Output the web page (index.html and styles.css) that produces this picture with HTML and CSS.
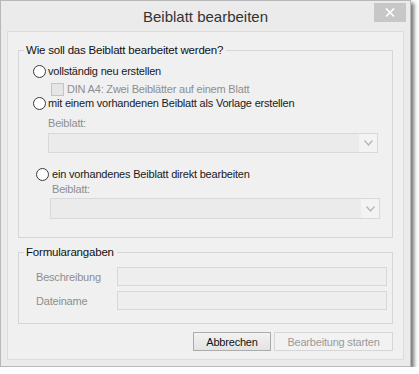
FILE: index.html
```html
<!DOCTYPE html>
<html lang="de">
<head>
<meta charset="utf-8">
<title>Beiblatt bearbeiten</title>
<link rel="stylesheet" href="styles.css">
</head>
<body>
<div class="window">
  <div class="titlebar">
    <span class="spacer"></span>
    <span class="title">Beiblatt bearbeiten</span>
    <span class="close"><svg width="10" height="9" viewBox="0 0 10 9"><path d="M1 0.5 L9 8.5 M9 0.5 L1 8.5" stroke="#fff" stroke-width="1.6" fill="none"/></svg></span>
  </div>
  <div class="client">
    <fieldset class="group group-mode">
      <legend>Wie soll das Beiblatt bearbeitet werden?</legend>
      <div class="row row-r1"><span class="radio"></span><span class="txt">vollständig neu erstellen</span></div>
      <div class="row row-cb"><span class="check"></span><span class="txt dis">DIN A4: Zwei Beiblätter auf einem Blatt</span></div>
      <div class="row row-r2"><span class="radio"></span><span class="txt">mit einem vorhandenen Beiblatt als Vorlage erstellen</span></div>
      <div class="lbl lbl1 dis">Beiblatt:</div>
      <div class="select sel1"><span class="sel-field"></span><span class="sel-btn"><svg width="9" height="6" viewBox="0 0 9 6"><path d="M0.5 0.5 L4.5 5 L8.5 0.5" stroke="#b3b3b3" stroke-width="1.2" fill="none"/></svg></span></div>
      <div class="row row-r3"><span class="radio"></span><span class="txt">ein vorhandenes Beiblatt direkt bearbeiten</span></div>
      <div class="lbl lbl2 dis">Beiblatt:</div>
      <div class="select sel2"><span class="sel-field"></span><span class="sel-btn"><svg width="9" height="6" viewBox="0 0 9 6"><path d="M0.5 0.5 L4.5 5 L8.5 0.5" stroke="#b3b3b3" stroke-width="1.2" fill="none"/></svg></span></div>
    </fieldset>
    <fieldset class="group group-form">
      <legend>Formularangaben</legend>
      <div class="frow frow1"><span class="flabel dis">Beschreibung</span><span class="input"></span></div>
      <div class="frow frow2"><span class="flabel dis">Dateiname</span><span class="input"></span></div>
    </fieldset>
    <div class="buttons">
      <span class="btn btn-cancel">Abbrechen</span>
      <span class="btn btn-start">Bearbeitung starten</span>
    </div>
  </div>
</div>
</body>
</html>
```
FILE: styles.css
```css
html, body {
  margin: 0;
  padding: 0;
  background: #ffffff;
}
body {
  font-family: "Liberation Sans", Arial, sans-serif;
  font-size: 11px;
  letter-spacing: -0.2px;
  color: #1a1a1a;
}
.window {
  width: 411px;
  height: 367px;
  box-sizing: border-box;
  border: 1px solid #b8b8b8;
  background: #ebebeb;
  box-shadow: 3px 3px 4px rgba(0, 0, 0, 0.55);
  display: flex;
  flex-direction: column;
}
.titlebar {
  height: 30px;
  display: grid;
  grid-template-columns: 1fr auto 1fr;
  flex: none;
}
.title {
  font-size: 15px;
  letter-spacing: 0;
  color: #333;
  line-height: 30px;
  padding-top: 1px;
}
.close {
  justify-self: end;
  align-self: start;
  margin-top: 2px;
  margin-right: 4px;
  width: 32px;
  height: 19px;
  background: #c7c7c7;
  display: flex;
  align-items: center;
  justify-content: center;
}
.client {
  margin: 0 6px 6px 6px;
  flex: 1;
  border: 1px solid #dcdcdc;
  background: #f0f0f0;
  display: flex;
  flex-direction: column;
}
.group {
  margin: 0 0 0 10px;
  width: 375px;
  box-sizing: border-box;
  padding: 0;
  min-width: 0;
  border: 1px solid #d6d6d6;
  display: flex;
  flex-direction: column;
  align-items: flex-start;
}
.group legend {
  margin-left: 5px;
  padding: 0 3px 0 2px;
  font-size: 11.5px;
  line-height: 14px;
  color: #111;
}
.group-mode {
  margin-top: 11px;
  padding-bottom: 18px;
}
.row {
  display: flex;
  align-items: center;
  height: 14px;
  line-height: 14px;
  white-space: nowrap;
}
.radio {
  width: 13px;
  height: 13px;
  box-sizing: border-box;
  border-radius: 50%;
  border: 1px solid #3c3c3c;
  background: radial-gradient(circle at 50% 40%, #ffffff 55%, #ededed 100%);
  flex: none;
}
.check {
  width: 13px;
  height: 13px;
  box-sizing: border-box;
  border: 1px solid #c4c4c4;
  background: #e6e6e6;
  flex: none;
}
.row-r1 { margin: 7px 0 0 14px; }
.row-r1 .txt, .row-r2 .txt { margin-left: 2px; }
.row-cb { margin: 4px 0 0 32px; }
.row-cb .txt { margin-left: 3px; }
.row-r2 { margin: 0 0 0 14px; }
.row-r3 { margin: 14px 0 0 17px; }
.row-r3 .txt { margin-left: 3px; }
.dis { color: #8e8e8e; }
.lbl {
  height: 14px;
  line-height: 14px;
}
.lbl1 { margin: 6px 0 0 29px; }
.lbl2 { margin: 1px 0 0 33px; }
.select {
  width: 330px;
  box-sizing: border-box;
  border: 1px solid #d9d9d9;
  background: #ebebeb;
  display: flex;
}
.sel-field { flex: 1; }
.sel-btn {
  width: 18px;
  background: #f3f3f3;
  display: flex;
  align-items: center;
  justify-content: center;
}
.sel1 { margin: 3px 0 0 29px; height: 20px; }
.sel2 { margin: 2px 0 0 31px; height: 21px; }
.group-form {
  margin-top: 7px;
  padding: 0 0 13px 0;
}
.frow {
  display: flex;
  align-items: center;
  height: 19px;
  margin-left: 17px;
}
.frow1 { margin-top: 8px; }
.frow2 { margin-top: 5px; }
.flabel {
  width: 81px;
  flex: none;
  line-height: 14px;
}
.input {
  width: 270px;
  height: 19px;
  box-sizing: border-box;
  border: 1px solid #d8d8d8;
  background: #eeeeee;
}
.buttons {
  margin-top: 8px;
  padding-right: 10px;
  display: flex;
  justify-content: flex-end;
  gap: 3px;
}
.btn {
  height: 19px;
  box-sizing: border-box;
  display: flex;
  align-items: center;
  justify-content: center;
  font-size: 11px;
}
.btn-cancel {
  width: 78px;
  border: 1px solid #acacac;
  background: linear-gradient(#f2f2f2, #e3e3e3);
  color: #111;
}
.btn-start {
  width: 119px;
  border: 1px solid #d6d6d6;
  background: #f2f2f2;
  color: #9a9a9a;
}
```
